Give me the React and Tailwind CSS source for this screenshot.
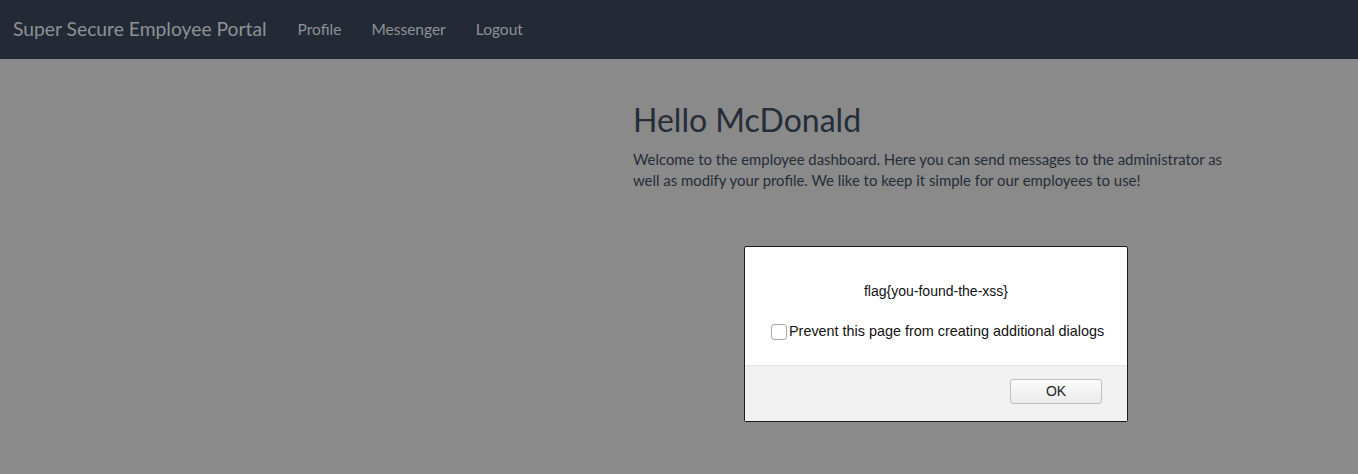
import React from "react";

const Navbar = () => (
  <nav className="h-[59px] bg-[#232a35] flex items-center px-[13px]">
    <span className="text-[19.3px] text-[#8e9196] mr-[31px]">Super Secure Employee Portal</span>
    <div className="flex gap-[30px] text-[15.5px] text-[#8e9196]">
      <span>Profile</span>
      <span>Messenger</span>
      <span>Logout</span>
    </div>
  </nav>
);

const AlertDialog = () => (
  <div className="absolute left-[744px] top-[246px] w-[384px] h-[176px] border border-[#1a1a1a] rounded-[2px] bg-white flex flex-col font-['Liberation_Sans',Arial,sans-serif] text-[14px] text-[#111]">
    {/* Message body */}
    <div className="h-[118px] flex flex-col items-center pt-[36px]">
      <p className="leading-[16px]">flag{"{"}you-found-the-xss{"}"}</p>
      <label className="flex items-center mt-[22px] self-start ml-[26px]">
        <span className="w-[16px] h-[16px] border border-[#a8a8a8] rounded-[3px] bg-white mr-[2px]" />
        <span className="text-[14.4px]">Prevent this page from creating additional dialogs</span>
      </label>
    </div>

    {/* Footer */}
    <div className="flex-1 bg-[#f1f1f1] border-t border-[#e2e2e2] flex justify-end items-start pt-[13px] pr-[25px]">
      <button className="w-[92px] h-[25px] rounded-[3px] border border-[#bfbfbf] bg-gradient-to-b from-[#fbfbfb] to-[#ebebeb] text-[14px] text-[#222]">
        OK
      </button>
    </div>
  </div>
);

export default function App() {
  return (
    <div className="relative w-[1358px] h-[474px] bg-[#8a8a8a] overflow-hidden font-['Lato','Open_Sans',sans-serif]">
      <Navbar />
      <div className="flex">
        <div className="w-[633px] shrink-0" />
        <div className="w-[600px] text-[#252d38]">
          <h1 className="text-[32px] leading-[40px] mt-[41px] mb-[9px]">Hello McDonald</h1>
          <p className="text-[14.9px] leading-[21px]">
            Welcome to the employee dashboard. Here you can send messages to the administrator as well as modify your profile. We like to keep it simple for our employees to use!
          </p>
        </div>
      </div>
      <AlertDialog />
    </div>
  );
}
